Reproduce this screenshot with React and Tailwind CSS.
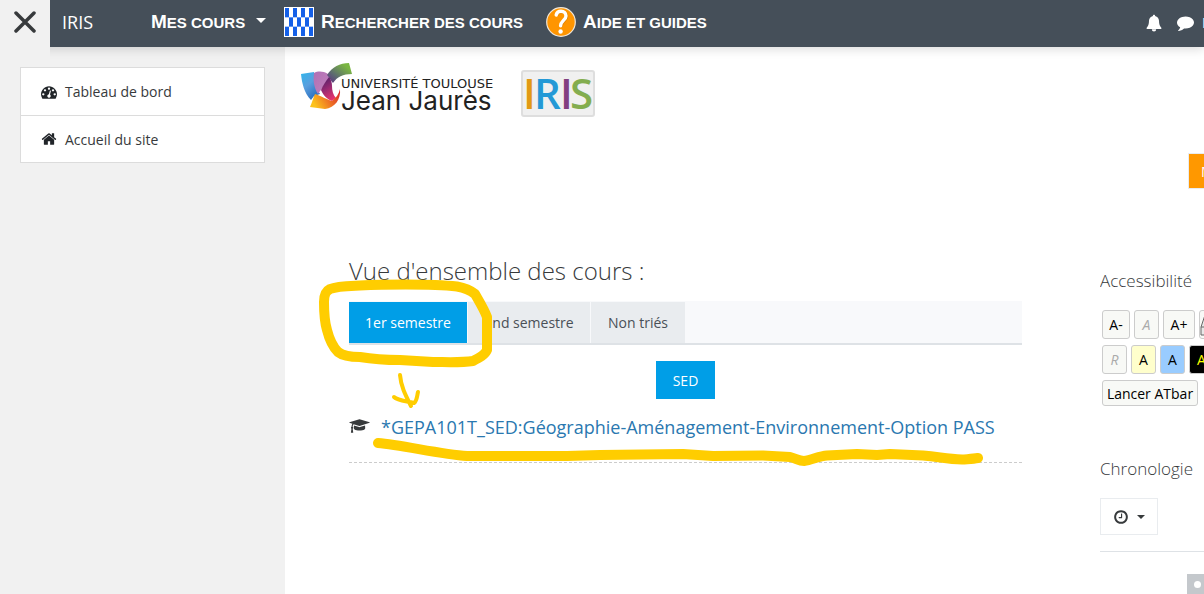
import React from "react";

const paths = {
  home: "M1472 992v480q0 26-19 45t-45 19h-384v-384h-256v384h-384q-26 0-45-19t-19-45v-480q0-1 .5-3t.5-3l575-474 575 474q1 2 1 6zm223-69l-62 74q-8 9-21 11h-3q-13 0-21-7l-692-577-692 577q-12 8-24 7-13-2-21-11l-62-74q-8-10-7-23.5t11-21.5l719-599q32-26 76-26t76 26l244 204v-195q0-14 9-23t23-9h192q14 0 23 9t9 23v408l219 182q10 8 11 21.5t-7 23.5z",
  dashboard:
    "M384 1152q0-53-37.5-90.5t-90.5-37.5-90.5 37.5-37.5 90.5 37.5 90.5 90.5 37.5 90.5-37.5 37.5-90.5zm192-448q0-53-37.5-90.5t-90.5-37.5-90.5 37.5-37.5 90.5 37.5 90.5 90.5 37.5 90.5-37.5 37.5-90.5zm428 481l101-382q6-26-7.5-48.5t-38.5-29.5-48 6.5-30 39.5l-101 382q-60 5-107 43.5t-63 98.5q-20 77 20 146t117 89 146-20 89-117q16-60-6-117t-72-91zm660-33q0-53-37.5-90.5t-90.5-37.5-90.5 37.5-37.5 90.5 37.5 90.5 90.5 37.5 90.5-37.5 37.5-90.5zm-640-640q0-53-37.5-90.5t-90.5-37.5-90.5 37.5-37.5 90.5 37.5 90.5 90.5 37.5 90.5-37.5 37.5-90.5zm448 192q0-53-37.5-90.5t-90.5-37.5-90.5 37.5-37.5 90.5 37.5 90.5 90.5 37.5 90.5-37.5 37.5-90.5zm320 448q0 261-141 483-19 29-54 29h-1402q-35 0-54-29-141-221-141-483 0-182 71-348t191-286 286-191 348-71 348 71 286 191 191 286 71 348z",
  cap: "M1774 836l18 316q4 69-82 128t-235 93.5-323 34.5-323-34.5-235-93.5-82-128l18-316 574 181q22 7 48 7t48-7zm530-324q0 23-22 31l-1120 352q-4 1-10 1t-10-1l-652-206q-43 34-71 111.5t-34 178.5q63 36 63 109 0 69-58 107l58 433q2 14-8 25-9 11-24 11h-192q-15 0-24-11-10-11-8-25l58-433q-58-38-58-107 0-73 65-111 11-207 98-330l-333-104q-22-8-22-31t22-31l1120-352q4-1 10-1t10 1l1120 352q22 8 22 31z",
  clock:
    "M1024 544v448q0 14-9 23t-23 9h-320q-14 0-23-9t-9-23v-64q0-14 9-23t23-9h224v-352q0-14 9-23t23-9h64q14 0 23 9t9 23zm416 352q0-148-73-273t-198-198-273-73-273 73-198 198-73 273 73 273 198 198 273 73 273-73 198-198 73-273zm224 0q0 209-103 385.5t-279.5 279.5-385.5 103-385.5-103-279.5-279.5-103-385.5 103-385.5 279.5-279.5 385.5-103 385.5 103 279.5 279.5 103 385.5z",
  comment:
    "M1792 896q0 174-120 321.5t-326 233-450 85.5q-70 0-145-8-198 175-460 242-49 14-114 22-17 2-30.5-9t-17.5-29v-1q-3-4-.5-12t2-10 4.5-9.5l6-9 7-8.5 8-9q7-8 31-34.5t34.5-38 31-39.5 32.5-51 27-59 26-76q-157-89-247.5-220t-90.5-281q0-130 71-248.5t191-204.5 286-136.5 348-50.5q244 0 450 85.5t326 233 120 321.5z",
};

function Icon({ name, className, width = 1792 }) {
  return (
    <svg viewBox={`0 0 ${width} 1792`} className={className} fill="currentColor" aria-hidden="true">
      <path d={paths[name]} />
    </svg>
  );
}

function Caret({ className }) {
  return (
    <svg viewBox="0 0 10 5" className={className} fill="currentColor" aria-hidden="true">
      <path d="M0 0h10L5 5z" />
    </svg>
  );
}

function CheckerIcon() {
  const cells = [];
  for (let row = 0; row < 3; row++) {
    for (let col = 0; col < 7; col++) {
      if ((row + col) % 2 === 0) {
        cells.push(<rect key={`${row}-${col}`} x={1 + col * 4} y={1 + row * 9.33} width="4" height="9.33" fill="#1560e8" />);
      }
    }
  }
  return (
    <svg viewBox="0 0 30 30" className="size-[30px] shrink-0" aria-hidden="true">
      <rect width="30" height="30" fill="#fff" />
      {cells}
    </svg>
  );
}

function HelpIcon() {
  return (
    <svg viewBox="0 0 30 30" className="size-[30px] shrink-0" fill="none" aria-hidden="true">
      <circle cx="15" cy="15" r="14.3" fill="#ff9500" stroke="#f0e6d8" strokeWidth="1.2" />
      <path d="M11 8.5c.6-2.4 2.4-3.5 4.8-3.5 3 0 5 1.700 5 4.500 0 4-5.600 5-5.600 9.800" stroke="#b86d08" strokeWidth="3" opacity=".5" />
      <path d="M10.200 8c.6-2.600 2.400-3.700 4.800-3.700 3 0 5 1.800 5 4.600 0 4-5.400 5.200-5.400 9.900" stroke="#fff" strokeWidth="3.400" strokeLinecap="round" />
      <circle cx="14.600" cy="24.500" r="2.200" fill="#fff" />
    </svg>
  );
}

function UniversityLogo() {
  return (
    <svg viewBox="0 0 196 54" className="h-[54px] w-[196px]" role="img" aria-label="Université Toulouse Jean Jaurès">
      <defs>
        <linearGradient id="lg-blue" x1="0" y1="0" x2="0.6" y2="1">
          <stop offset="0" stopColor="#2fb6ec" />
          <stop offset="0.5" stopColor="#5a9fde" />
          <stop offset="1" stopColor="#2a6fc0" />
        </linearGradient>
        <linearGradient id="lg-green" x1="0" y1="1" x2="1" y2="0">
          <stop offset="0" stopColor="#5b2a85" />
          <stop offset="0.35" stopColor="#5d6c70" />
          <stop offset="0.8" stopColor="#7ab642" />
        </linearGradient>
        <linearGradient id="lg-purple" x1="0" y1="0" x2="1" y2="1">
          <stop offset="0" stopColor="#b06fb4" />
          <stop offset="1" stopColor="#c483bd" />
        </linearGradient>
        <linearGradient id="lg-magenta" x1="0.2" y1="0" x2="0.6" y2="1">
          <stop offset="0" stopColor="#4c1f68" />
          <stop offset="0.5" stopColor="#9a2a72" />
          <stop offset="1" stopColor="#e8336d" />
        </linearGradient>
        <linearGradient id="lg-orange" x1="0" y1="0.4" x2="1" y2="0">
          <stop offset="0" stopColor="#fcc21c" />
          <stop offset="0.45" stopColor="#ee7623" />
          <stop offset="1" stopColor="#d8202c" />
        </linearGradient>
      </defs>
      <path d="M0 11L13 9C13 16 15 25 19 31L13 33L10 37C3 30 1 20 0 11Z" fill="url(#lg-blue)" />
      <path d="M13 10C17 8 22 8 27 11C29 13 29 14 28 15C24 20 21 26 17 31C13 25 12 17 13 10Z" fill="url(#lg-purple)" />
      <path d="M26 12C31 4 39 0 48 0L51 11C42 11 36 14 32 20C30 18 28 14 26 12Z" fill="url(#lg-green)" />
      <path d="M28 14C30 16 31 20 31 23C31 27 32 32 35 35L31 38C26 36 22 32 20 27C22 22 25 18 28 14Z" fill="url(#lg-magenta)" />
      <path d="M14 31C20 33 27 37 31 38C35 35 38 31 39 26C40 36 34 45 24 46L9 44C11 40 12 35 14 31Z" fill="url(#lg-orange)" />
      <text x="40" y="25" fontSize="13" fill="#222" fontFamily="DejaVu Sans, sans-serif">UNIVERSITÉ TOULOUSE</text>
      <text x="40" y="47" fontSize="26" fill="#222" fontFamily="Inter, sans-serif">Jean Jaurès</text>
    </svg>
  );
}

function NavLink({ icon, caret, children, className = "" }) {
  return (
    <a href="#" className={`flex items-center gap-[7px] whitespace-nowrap font-['Liberation_Sans',Arial,sans-serif] font-bold text-white ${className}`}>
      {icon}
      <span className="inline-block text-[15px] leading-6 uppercase first-letter:text-[19px]">{children}</span>
      {caret && <Caret className="mb-1 ml-1 h-[5px] w-[10px]" />}
    </a>
  );
}

function ToolButton({ label, className, children }) {
  return (
    <button type="button" aria-label={label} className={`h-[29px] shrink-0 rounded-[3px] border border-[#ccc] text-[14px] text-black ${className}`}>
      {children}
    </button>
  );
}

function Annotations() {
  return (
    <svg viewBox="317 253 680 220" className="pointer-events-none absolute top-0 -left-8 h-[220px] w-[680px]" fill="none" stroke="#ffcd00" strokeLinecap="round" strokeLinejoin="round" aria-hidden="true">
      <path strokeWidth="10" d="M330 289C337 286 348 286 360 285.500C380 284.500 430 283.500 457 286.500C465 288 470 290 475 294C479 301 484 309 487 317L487 350C485 355 479 358 473 361C460 363 445 362 433 362L400 360C385 360 372 359 360 357C352 357 343 356 338 352C332 346 329 338 327 330C324 320 324 312 324 302C324 294 326 291 330 289Z" />
      <path strokeWidth="4" d="M400 375C401 387 406 396 411 406M394 397C398 401 407 401 414 403C417 401 417 396 418 392" />
      <path strokeWidth="10" d="M378 443C402 445 440 454 467 456L567 456L600 455L683 454L713 456L763 455.500L790 457C797 459 799 461 804 461C812 460 819 456 827 455.500L857 454L877 455L890 454L923 455.500C940 457 947 459 962 459.500C968 459 973 459 978 458" />
    </svg>
  );
}

export default function App() {
  return (
    <div className="flex min-h-screen flex-col overflow-x-hidden bg-white font-['Open_Sans','Noto_Sans',sans-serif] text-[14px] text-[#373a3c]">
      <header className="relative z-10 flex h-[47px] shrink-0 bg-[#454f59] shadow-[0_2px_10px_rgba(0,0,0,0.15)]">
        <button type="button" aria-label="Fermer le menu" className="flex w-[50px] shrink-0 items-center justify-center bg-[#f1f1f1] pb-[3px] shadow-[0_14px_0_#f1f1f1]">
          <svg viewBox="0 0 22 22" className="size-[22px]" stroke="#373a3c" strokeWidth="3.500" strokeLinecap="round" aria-hidden="true">
            <path d="M2 2L20 20M20 2L2 20" />
          </svg>
        </button>
        <nav className="flex min-w-0 flex-1 items-center pb-[3px]">
          <a href="#" className="ml-3 w-[89px] text-[18px] leading-6 text-white">IRIS</a>
          <NavLink caret className="w-[133px]">Mes cours</NavLink>
          <NavLink icon={<CheckerIcon />} className="w-[262px]">Rechercher des cours</NavLink>
          <NavLink icon={<HelpIcon />}>Aide et guides</NavLink>
        </nav>
        <div className="flex shrink-0 items-center pb-[2px] text-white">
          <button type="button" aria-label="Notifications" className="mr-[15px]">
            <svg viewBox="0 0 16 18" className="h-[18px] w-4" fill="currentColor" aria-hidden="true">
              <path d="M8 .8c.7 0 1.100.5 1.100 1.100C11.500 2.500 13 4.400 13 6.800c0 3.600.8 5.200 2.500 7.100 0 .6-.4 1-1 1h-13c-.6 0-1-.4-1-1C2.200 12 3 10.400 3 6.800c0-2.400 1.500-4.300 3.900-4.900C6.900 1.300 7.300.8 8 .8zM5.800 15.300h4.400a2.200 2.200 0 0 1-4.400 0z" />
            </svg>
          </button>
          <button type="button" aria-label="Messages">
            <Icon name="comment" className="size-[17px]" />
          </button>
          <span className="ml-2 w-[2px] overflow-hidden text-[14px]">N</span>
        </div>
      </header>

      <div className="flex flex-1">
        <aside className="w-[285px] shrink-0 bg-[#f1f1f1] p-5">
          <nav className="border border-[#dcdcdc] bg-white">
            <a href="#" className="flex h-12 items-center gap-2 border-b border-[#dcdcdc] pl-5">
              <Icon name="dashboard" className="size-4 text-[#212529]" />
              Tableau de bord
            </a>
            <a href="#" className="flex h-[46px] items-center gap-2 pl-5">
              <Icon name="home" className="size-4 text-[#212529]" />
              Accueil du site
            </a>
          </nav>
        </aside>

        <main className="min-w-0 flex-1">
          <div className="flex items-end gap-6 px-4 pt-4">
            <UniversityLogo />
            <svg viewBox="0 0 74 47" className="h-[47px] w-[74px]" role="img" aria-label="IRIS">
              <rect x="1" y="1" width="72" height="45" rx="2" fill="#f0f0f0" stroke="#dedede" strokeWidth="2" />
              <text y="39" fontSize="42" fontWeight="600" fontFamily="Open Sans, sans-serif">
                <tspan x="2" fill="#e29a14">I</tspan>
                <tspan x="13" fill="#2499d6">R</tspan>
                <tspan x="39" fill="#823f80">I</tspan>
                <tspan x="49" fill="#83ad4f">S</tspan>
              </text>
            </svg>
          </div>

          <div className="mt-9 flex justify-end">
            <div className="w-4 overflow-hidden">
              <button type="button" className="h-9 border border-[#e9ecef] bg-[#ff9800] px-3 text-[14px] whitespace-nowrap text-white">Modifier</button>
            </div>
          </div>

          <div className="mt-16 flex gap-[78px] pl-16">
            <section className="relative min-w-0 flex-1">
              <h2 className="text-[24px] leading-9 font-light">Vue d'ensemble des cours :</h2>
              <div role="tablist" className="mt-3 flex h-11 gap-px border-b-2 border-[#dee2e6] bg-[#f8f9fb] pt-px text-[#495057]">
                <button type="button" role="tab" aria-selected="true" className="w-[118px] bg-[#009ee7] text-white">1er semestre</button>
                <button type="button" role="tab" aria-selected="false" className="w-[122px] bg-[#e9ecef]">2nd semestre</button>
                <button type="button" role="tab" aria-selected="false" className="w-[94px] bg-[#e9ecef]">Non triés</button>
              </div>
              <div className="mt-4 flex justify-center">
                <button type="button" className="h-[38px] w-[59px] bg-[#009ee7] text-white">SED</button>
              </div>
              <div className="flex h-16 items-start gap-[11px] border-b border-dashed border-[#ccc] pt-4">
                <Icon name="cap" width={2304} className="mt-[3px] h-4 w-[21px] shrink-0 text-[#373a3c]" />
                <a href="#" className="text-[18px] leading-6 whitespace-nowrap text-[#2a78b0]">*GEPA101T_SED:Géographie-Aménagement-Environnement-Option PASS</a>
              </div>
              <Annotations />
            </section>

            <aside className="w-[104px] shrink-0 overflow-hidden pt-[15px]">
              <h3 className="text-[17px] leading-[26px] font-light">Accessibilité</h3>
              <div className="mt-4 flex flex-col gap-[6px] pl-[2px]">
                <div className="flex gap-1">
                  <ToolButton label="Réduire le texte" className="w-7 bg-[#f8f9f6]">A-</ToolButton>
                  <ToolButton label="Taille normale" className="w-[25px] bg-[#f8f9f6] text-[#aaa]! italic">A</ToolButton>
                  <ToolButton label="Agrandir le texte" className="w-8 bg-[#f8f9f6]">A+</ToolButton>
                  <ToolButton label="Enregistrer" className="w-7 bg-[#f8f9f6]">
                    <svg viewBox="0 0 24 24" className="h-6 w-6" fill="#e8e8e8" stroke="#666" aria-hidden="true">
                      <path d="M5 2h14l4 12v8H1v-8z" />
                      <path d="M1 14h22M5 4h12M4 8h15" />
                    </svg>
                  </ToolButton>
                </div>
                <div className="flex gap-1">
                  <ToolButton label="Réinitialiser" className="w-[25px] bg-[#f8f9f6] text-[#aaa]! italic">R</ToolButton>
                  <ToolButton label="Fond jaune" className="w-[25px] bg-[#ffffcc]">A</ToolButton>
                  <ToolButton label="Fond bleu" className="w-[25px] bg-[#99ccff]">A</ToolButton>
                  <ToolButton label="Fond noir" className="w-[25px] bg-black text-[#ffff00]!">A</ToolButton>
                </div>
                <button type="button" className="h-[26px] w-24 rounded-[3px] border border-[#ccc] bg-[#f8f9f6] text-[14px] whitespace-nowrap text-black">Lancer ATbar</button>
              </div>
              <h3 className="mt-[50px] text-[17px] leading-[26px] font-light">Chronologie</h3>
              <button type="button" aria-label="Filtrer la chronologie" className="mt-4 flex h-[37px] w-[58px] items-center justify-center gap-2 border border-[#e9ecef]">
                <Icon name="clock" className="size-4" />
                <Caret className="h-1 w-2" />
              </button>
              <hr className="mt-4 border-[#dee2e6]" />
              <div className="mt-[22px] flex justify-end">
                <div className="flex h-5 w-[17px] items-center bg-[#c4c8cc] pl-[7px]">
                  <span className="size-[7px] shrink-0 rounded-full bg-white" />
                </div>
              </div>
            </aside>
          </div>
        </main>
      </div>
    </div>
  );
}
